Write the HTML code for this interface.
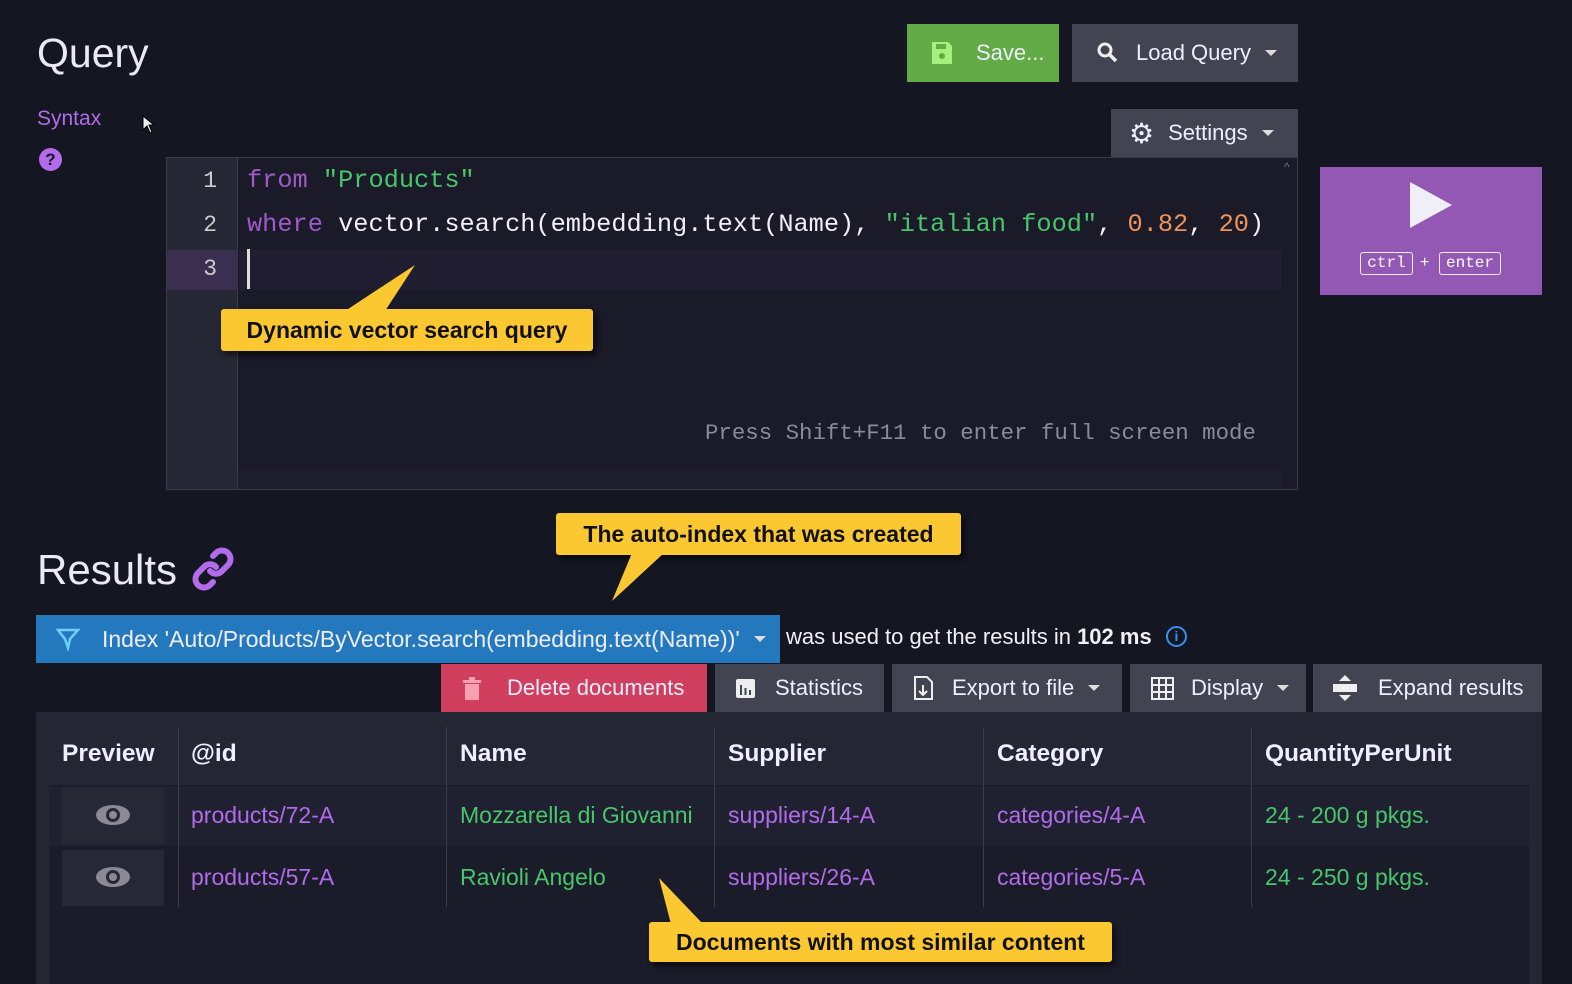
<!DOCTYPE html>
<html><head><meta charset="utf-8"><style>
*{box-sizing:border-box;margin:0;padding:0}
body{width:1572px;height:984px;background:#141622;font-family:"Liberation Sans",sans-serif;color:#e8e8f0;position:relative;overflow:hidden}
.a{position:absolute}
.btn{position:absolute;background:#424452;color:#eef;font-size:22px;display:flex;align-items:center;white-space:nowrap}
.mono{font-family:"Liberation Mono",monospace}
.cl{position:absolute;background:#fcc832;color:#111;font-weight:bold;font-size:23px;display:flex;align-items:center;justify-content:center;border-radius:3px;box-shadow:3px 4px 6px rgba(0,0,0,.6)}
.th{position:absolute;top:740px;font-weight:bold;font-size:24.5px;color:#eef}
.td{position:absolute;font-size:23px}
.vl{position:absolute;top:727px;height:180px;width:1px;background:#3a3d4a}
.car{font-size:0;border-left:6px solid transparent;border-right:6px solid transparent;border-top:6px solid #ddd;display:inline-block}
</style></head><body>
<div class="a" style="left:37px;top:30px;font-size:41px;color:#eaeaf4">Query</div>
<div class="a" style="left:37px;top:107px;font-size:21px;color:#b26bea">Syntax</div>
<div class="a" style="left:39px;top:148px;width:23px;height:23px;border-radius:50%;background:#b26bea;color:#141622;font-weight:bold;font-size:17px;text-align:center;line-height:23px">?</div>
<svg class="a" style="left:142px;top:115px" width="14" height="20"><path d="M1 1 L1 15 L5 11 L8 18 L10 17 L7 10 L12 10 Z" fill="#eee" stroke="#000" stroke-width="1"/></svg>

<div class="btn" style="left:907px;top:24px;width:152px;height:58px;background:#62ab46"><svg style="margin-left:25px" width="20" height="22"><path d="M0 0h16l4 4v18H0z" fill="#a5f07d"/><rect x="4" y="2" width="10" height="5" fill="#62ab46"/><circle cx="10" cy="14" r="3" fill="#62ab46"/></svg><span style="margin-left:24px">Save...</span></div>
<div class="btn" style="left:1072px;top:24px;width:226px;height:58px"><svg style="margin-left:25px" width="22" height="22"><circle cx="8" cy="8" r="6" fill="none" stroke="#eee" stroke-width="3"/><path d="M12 12l7 7" stroke="#eee" stroke-width="3.5"/></svg><span style="margin-left:17px">Load Query</span><span class="car" style="margin-left:14px"></span></div>
<div class="btn" style="left:1111px;top:109px;width:187px;height:48px"><span style="margin-left:18px;font-size:28px">⚙</span><span style="margin-left:14px">Settings</span><span class="car" style="margin-left:14px"></span></div>

<div class="a" style="left:166px;top:157px;width:1132px;height:333px;background:#1a1a28;border:1px solid #3a3c48"></div>
<div class="a" style="left:167px;top:158px;width:71px;height:331px;background:#262735;border-right:1px solid #3a3c48"></div>
<div class="a" style="left:167px;top:250px;width:71px;height:40px;background:#3a2f4e"></div>
<div class="a" style="left:239px;top:250px;width:1042px;height:40px;background:#201e30"></div>
<div class="a" style="left:239px;top:470px;width:1042px;height:19px;background:#1e1f2c"></div>
<div class="a mono" style="left:167px;top:159px;width:50px;text-align:right;font-size:23px;line-height:44px;color:#ccc">1<br>2<br>3</div>
<div class="a mono" style="left:247px;top:159px;font-size:25.3px;line-height:44px;white-space:pre;color:#f0f0f8"><span style="color:#a159c8">from</span> <span style="color:#49c56b">"Products"</span>
<span style="color:#a159c8">where</span> vector.search(embedding.text(Name), <span style="color:#49c56b">"italian food"</span>, <span style="color:#f0935a">0.82</span>, <span style="color:#f0935a">20</span>)</div>
<div class="a" style="left:247px;top:249px;width:3px;height:40px;background:#ddd"></div>
<div class="a mono" style="left:705px;top:420px;font-size:22.4px;color:#8a8a98">Press Shift+F11 to enter full screen mode</div>
<div class="a" style="left:1284px;top:160px;font-size:12px;color:#777">^</div>

<div class="a" style="left:1320px;top:167px;width:222px;height:128px;background:#9358b4"></div>
<svg class="a" style="left:1410px;top:182px" width="42" height="46"><path d="M0 0L42 23L0 46Z" fill="#f0eef6"/></svg>
<div class="a mono" style="left:1360px;top:252px;width:53px;height:23px;border:1px solid #eee;border-radius:3px;font-size:16px;text-align:center;line-height:21px;color:#fff">ctrl</div>
<div class="a" style="left:1420px;top:254px;font-size:16px;color:#fff">+</div>
<div class="a mono" style="left:1439px;top:252px;width:62px;height:23px;border:1px solid #eee;border-radius:3px;font-size:16px;text-align:center;line-height:21px;color:#fff">enter</div>

<div class="cl" style="left:221px;top:309px;width:372px;height:42px">Dynamic vector search query</div>
<svg class="a" style="left:345px;top:265px" width="75" height="46"><path d="M70 0L0 46L40 46Z" fill="#fcc832"/></svg>

<div class="a" style="left:37px;top:546px;font-size:42px;color:#eaeaf4">Results</div>
<svg class="a" style="left:190px;top:547px" width="46" height="44" viewBox="0 0 46 44"><g fill="none" stroke="#b26bea" stroke-width="6" stroke-linecap="round"><path d="M20 24a8 8 0 0 0 12 0l6-6a8 8 0 0 0-12-12l-3 3"/><path d="M26 20a8 8 0 0 0-12 0l-6 6a8 8 0 0 0 12 12l3-3"/></g></svg>

<div class="cl" style="left:556px;top:513px;width:405px;height:42px">The auto-index that was created</div>
<svg class="a" style="left:612px;top:553px" width="60" height="50"><path d="M20 0L0 48L52 0Z" fill="#fcc832"/></svg>

<div class="btn" style="left:36px;top:615px;width:744px;height:48px;background:#2478be;font-size:23px"><svg style="margin-left:20px" width="24" height="24"><path d="M2 3L22 3L14 12L12 21L9 12Z" fill="none" stroke="#6fd0ff" stroke-width="2.5"/></svg><span style="margin-left:22px">Index 'Auto/Products/ByVector.search(embedding.text(Name))'</span><span class="car" style="margin-left:14px"></span></div>
<div class="a" style="left:786px;top:624px;font-size:22px;color:#f0f0f8">was used to get the results in <b>102 ms</b></div>
<div class="a" style="left:1166px;top:626px;width:21px;height:21px;border:2px solid #3a8fe8;border-radius:50%;color:#3a8fe8;font-size:14px;font-weight:bold;text-align:center;line-height:17px">i</div>

<div class="btn" style="left:441px;top:664px;width:266px;height:48px;background:#d03f5e"><svg style="margin-left:22px" width="18" height="24"><rect x="0" y="4" width="18" height="3" fill="#f8a0b0"/><rect x="6" y="1" width="6" height="3" fill="#f8a0b0"/><rect x="2" y="8" width="14" height="16" fill="#f8a0b0"/></svg><span style="margin-left:26px">Delete documents</span></div>
<div class="btn" style="left:715px;top:664px;width:169px;height:48px"><svg style="margin-left:21px" width="19" height="19"><rect width="19" height="19" rx="2" fill="#eee"/><rect x="4" y="6" width="2" height="10" fill="#424452"/><rect x="8.5" y="9" width="2" height="7" fill="#424452"/><rect x="13" y="11" width="2" height="5" fill="#424452"/></svg><span style="margin-left:20px">Statistics</span></div>
<div class="btn" style="left:892px;top:664px;width:230px;height:48px"><svg style="margin-left:21px" width="22" height="24"><path d="M2 1h12l5 5v17H2z" fill="none" stroke="#eee" stroke-width="2"/><path d="M10 9v10M6 15l4 4 4-4" stroke="#eee" stroke-width="2" fill="none"/></svg><span style="margin-left:17px">Export to file</span><span class="car" style="margin-left:14px"></span></div>
<div class="btn" style="left:1130px;top:664px;width:176px;height:48px"><svg style="margin-left:21px" width="23" height="23"><rect x="1" y="1" width="21" height="21" fill="none" stroke="#eee" stroke-width="2"/><path d="M1 8h21M1 15h21M8 1v21M15 1v21" stroke="#eee" stroke-width="2"/></svg><span style="margin-left:17px">Display</span><span class="car" style="margin-left:14px"></span></div>
<div class="btn" style="left:1313px;top:664px;width:229px;height:48px"><svg style="margin-left:20px" width="24" height="26"><path d="M12 0l6 6H6z" fill="#eee"/><rect x="0" y="9" width="24" height="8" fill="#eee"/><path d="M12 26l6-6H6z" fill="#eee"/></svg><span style="margin-left:21px">Expand results</span></div>

<div class="a" style="left:36px;top:712px;width:1506px;height:272px;background:#242733"></div>
<div class="a" style="left:49px;top:727px;width:1480px;height:257px;background:#1b1c29"></div>
<div class="a" style="left:49px;top:727px;width:1480px;height:58px;background:#242733"></div>
<div class="a" style="left:49px;top:786px;width:1480px;height:60px;background:#1f2030"></div>
<div class="a" style="left:49px;top:848px;width:1480px;height:58px;background:#1b1c2a"></div>
<div class="a" style="left:62px;top:788px;width:102px;height:56px;background:#262835"></div>
<div class="a" style="left:62px;top:850px;width:102px;height:56px;background:#262835"></div>
<svg class="a" style="left:95px;top:804px" width="36" height="22"><ellipse cx="18" cy="11" rx="17" ry="10" fill="#8a8a96"/><circle cx="18" cy="11" r="7" fill="#262835"/><circle cx="18" cy="11" r="4" fill="#8a8a96"/></svg>
<svg class="a" style="left:95px;top:866px" width="36" height="22"><ellipse cx="18" cy="11" rx="17" ry="10" fill="#8a8a96"/><circle cx="18" cy="11" r="7" fill="#262835"/><circle cx="18" cy="11" r="4" fill="#8a8a96"/></svg>
<div class="vl" style="left:178px"></div><div class="vl" style="left:446px"></div><div class="vl" style="left:714px"></div><div class="vl" style="left:983px"></div><div class="vl" style="left:1251px"></div>
<div class="th" style="left:62px">Preview</div><div class="th" style="left:191px">@id</div><div class="th" style="left:460px">Name</div><div class="th" style="left:728px">Supplier</div><div class="th" style="left:997px">Category</div><div class="th" style="left:1265px">QuantityPerUnit</div>
<div class="td" style="left:191px;top:802px;color:#b26bea">products/72-A</div>
<div class="td" style="left:460px;top:802px;color:#49c56b">Mozzarella di Giovanni</div>
<div class="td" style="left:728px;top:802px;color:#b26bea">suppliers/14-A</div>
<div class="td" style="left:997px;top:802px;color:#b26bea">categories/4-A</div>
<div class="td" style="left:1265px;top:802px;color:#49c56b">24 - 200 g pkgs.</div>
<div class="td" style="left:191px;top:864px;color:#b26bea">products/57-A</div>
<div class="td" style="left:460px;top:864px;color:#49c56b">Ravioli Angelo</div>
<div class="td" style="left:728px;top:864px;color:#b26bea">suppliers/26-A</div>
<div class="td" style="left:997px;top:864px;color:#b26bea">categories/5-A</div>
<div class="td" style="left:1265px;top:864px;color:#49c56b">24 - 250 g pkgs.</div>

<div class="cl" style="left:649px;top:922px;width:463px;height:40px">Documents with most similar content</div>
<svg class="a" style="left:657px;top:878px" width="50" height="46"><path d="M2 0L14 46L46 46Z" fill="#fcc832"/></svg>
</body></html>
